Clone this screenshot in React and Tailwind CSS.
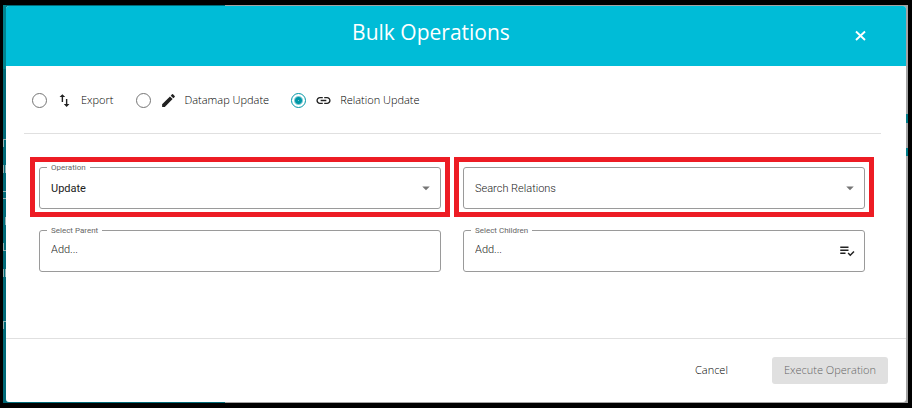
import { useState } from 'react';
import { MdArrowDropDown, MdCreate, MdImportExport, MdLink, MdPlaylistAddCheck } from 'react-icons/md';

const MODES = [
  { id: 'export', label: 'Export', icon: MdImportExport },
  { id: 'datamap', label: 'Datamap Update', icon: MdCreate },
  { id: 'relation', label: 'Relation Update', icon: MdLink },
];

// Which sides of each sidebar item still show beside the dialog
const NAV_EDGES = [
  'border-l border-t',
  'border-l border-r',
  'border-t border-b',
  'border-r',
  'border-l border-b',
  'border-l border-r',
  'border-transparent',
  'border-l border-t',
];

const controlClass =
  "block w-full h-[42px] appearance-none rounded-[3px] border border-[#9a9a9a] bg-white px-[11px] font-['Roboto',sans-serif] text-[11px] placeholder:text-[#222] outline-none";

function Field({ id, label, highlighted, children }) {
  return (
    <div className="relative">
      {children}
      {label && (
        <label
          htmlFor={id}
          className="absolute left-2 -top-1.5 bg-white px-1 font-['Roboto',sans-serif] text-[8px] font-normal leading-[13px] text-[#666]"
        >
          {label}
        </label>
      )}
      {highlighted && (
        <div className="pointer-events-none absolute -inset-x-[9px] -top-2.5 -bottom-2 border-5 border-[#ed1c24]" />
      )}
    </div>
  );
}

function SelectArrow() {
  return <MdArrowDropDown className="pointer-events-none absolute right-1.5 top-3 size-[18px] text-[#757575]" />;
}

export default function App() {
  const [mode, setMode] = useState('relation');
  const [operation, setOperation] = useState('update');
  const [relation, setRelation] = useState('');

  return (
    <div className="min-h-screen flex bg-black pl-[3px] pr-1 py-[5px] font-['Open_Sans',sans-serif] text-[11px] font-light text-black">
      {/* Edge of the page behind the dialog */}
      <div className="flex-1 flex bg-linear-to-r from-[#006a78] from-[222px] to-[#a3a3a3] to-[222px]">
        <div className="w-[3px] bg-[#006a78]">
          <div className="h-16 bg-[#00838f]" />
          <div className="flex flex-col gap-[18px] pt-[70px]">
            {NAV_EDGES.map((edge, i) => (
              <div key={i} className={`h-2 border-[#8fb0b2] ${edge}`} />
            ))}
          </div>
        </div>

        <div role="dialog" aria-labelledby="dialog-title" className="flex-1 my-px flex flex-col overflow-hidden rounded-[3px] bg-white">
          <header className="flex h-15 items-center bg-[#00bcd7] px-5 text-white">
            <h1 id="dialog-title" className="flex-1 pb-2 text-center text-[21px] font-normal leading-8">Bulk Operations</h1>
            <button type="button" aria-label="Close" className="flex w-[50px] justify-center">
              <svg viewBox="0 0 16 16" className="size-4" fill="none" stroke="currentColor" strokeWidth="1.9">
                <path d="M3 3.5l9 8.5M12 3.5l-9 8.5" />
              </svg>
            </button>
          </header>

          <main className="flex-1 pl-[18px] pr-[25px]">
            <div role="radiogroup" aria-label="Mode" className="flex h-17 items-center gap-[22px] border-b border-[#e0e0e0] pl-2 pt-0.5">
              {MODES.map(({ id, label, icon: Icon }) => (
                <label key={id} className="flex items-center">
                  <input
                    type="radio"
                    name="mode"
                    checked={mode === id}
                    onChange={() => setMode(id)}
                    className="size-[15px] appearance-none rounded-full border border-[#757575] checked:border-[#0097a7] checked:bg-[radial-gradient(circle,#7fcbd4_0,#0097a7_1px,#0097a7_3px,transparent_5px)]"
                  />
                  <Icon className="ml-[9px] mr-2 size-[17px] text-[#212121]" />
                  {label}
                </label>
              ))}
            </div>

            <div className="grid grid-cols-2 gap-x-[22px] gap-y-[21px] pt-[33px] pl-[15px] pr-4">
              <Field id="operation" label="Operation" highlighted>
                <select
                  id="operation"
                  value={operation}
                  onChange={(e) => setOperation(e.target.value)}
                  className={`${controlClass} pt-0.5 font-normal text-[#212121]`}
                >
                  <option value="update">Update</option>
                </select>
                <SelectArrow />
              </Field>
              <Field highlighted>
                <select
                  aria-label="Search Relations"
                  value={relation}
                  onChange={(e) => setRelation(e.target.value)}
                  className={`${controlClass} pt-0.5 font-light text-[#222]`}
                >
                  <option value="">Search Relations</option>
                </select>
                <SelectArrow />
              </Field>
              <Field id="parent" label="Select Parent">
                <input id="parent" type="text" placeholder="Add..." className={`${controlClass} pb-1 font-light`} />
              </Field>
              <Field id="children" label="Select Children">
                <input id="children" type="text" placeholder="Add..." className={`${controlClass} pb-1 font-light`} />
                <button type="button" aria-label="Pick from list" className="absolute right-[9px] top-3">
                  <MdPlaylistAddCheck className="size-[18px] text-[#212121]" />
                </button>
              </Field>
            </div>
          </main>

          <footer className="flex h-16 items-center justify-end gap-8 border-t border-[#e0e0e0] px-[18px]">
            <button type="button" className="px-3 text-black">Cancel</button>
            <button type="button" disabled className="h-[27px] rounded-[3px] bg-[#e0e0e0] px-3 text-[#666]">
              Execute Operation
            </button>
          </footer>
        </div>

        {/* Right edge */}
        <div className="w-0.5 bg-[#a3a3a3] pt-[109px]">
          <div className="mb-[25px] h-[9px] bg-[#007c89]" />
          <div className="h-2 bg-[#007c89]" />
        </div>
      </div>
    </div>
  );
}
